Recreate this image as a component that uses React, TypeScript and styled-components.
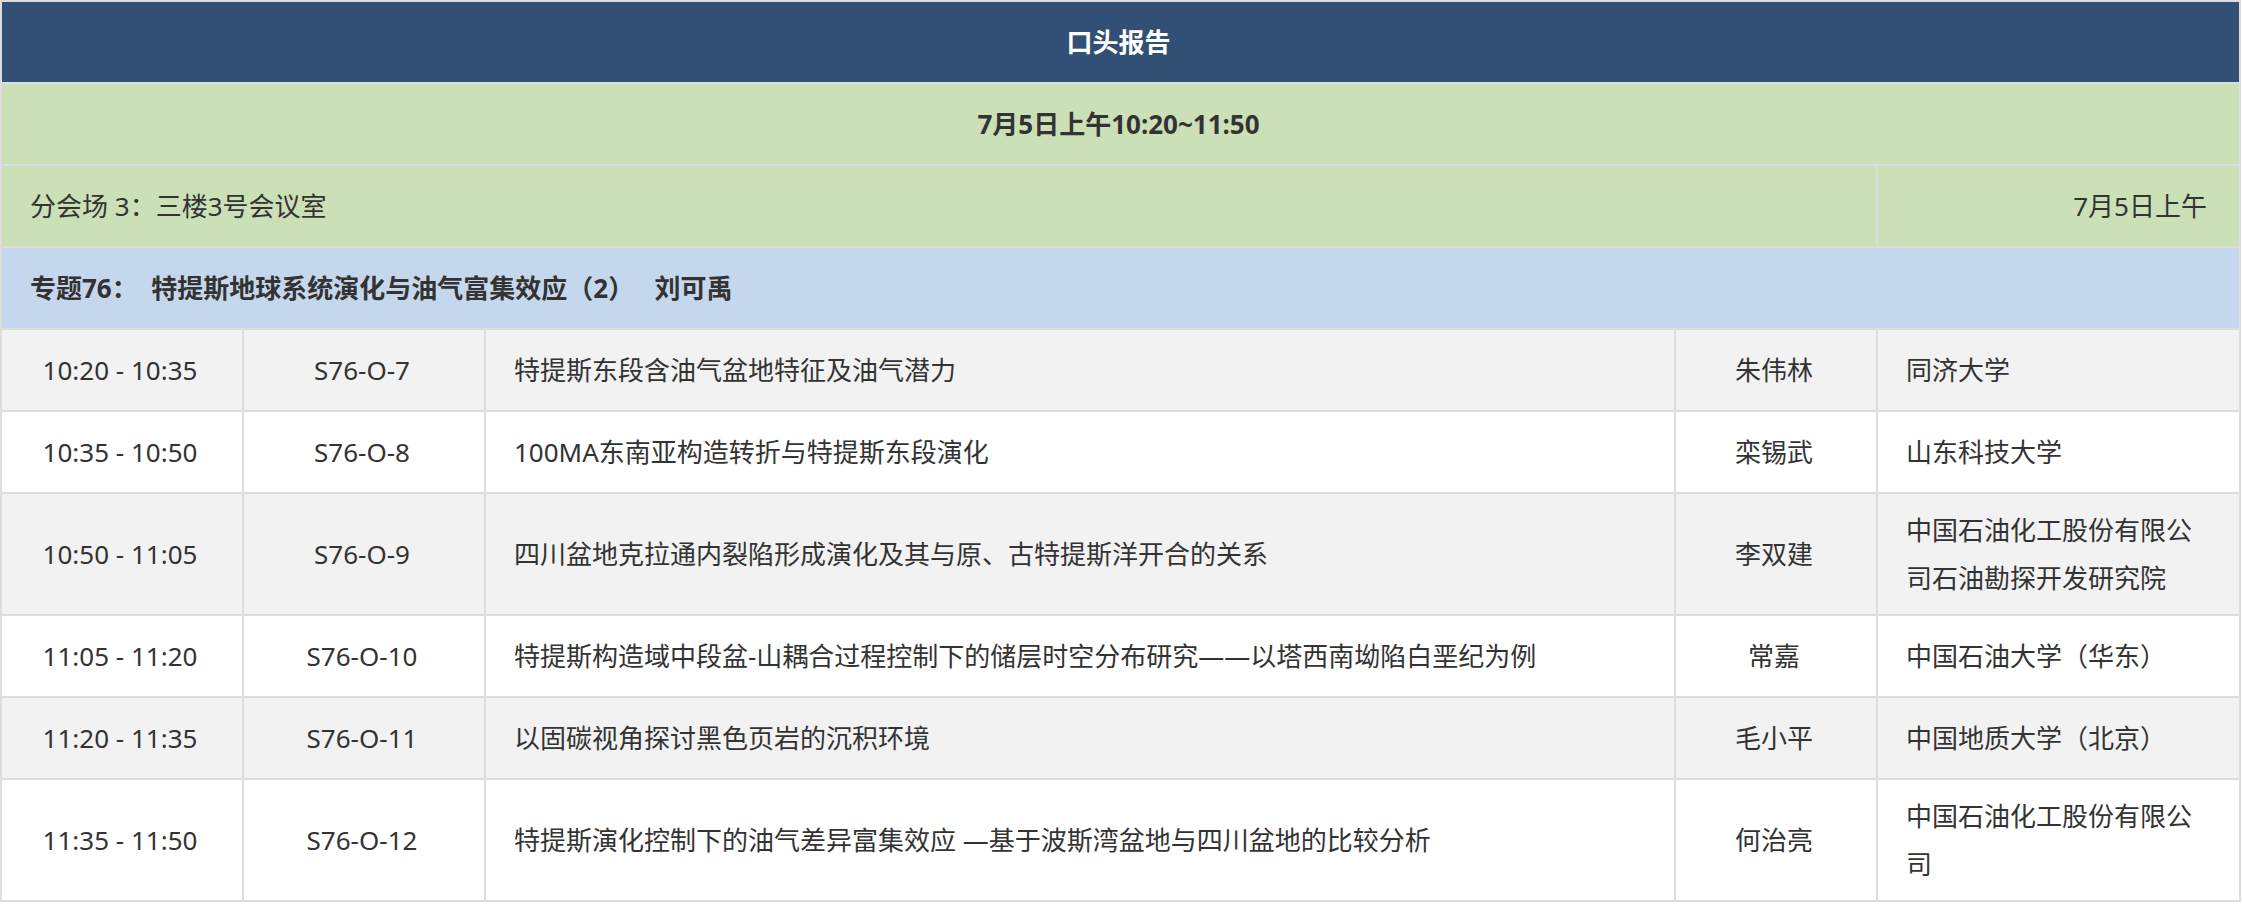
import React from "react";
import styled, { createGlobalStyle } from "styled-components";

const GlobalStyle = createGlobalStyle`
  html, body {
    margin: 0;
    padding: 0;
    background: #ffffff;
  }
  body {
    font-family: "Noto Sans", "Noto Sans CJK SC", sans-serif;
    color: #333333;
  }
`;

const colors = {
  navy: "#324f76",
  green: "#cce0b7",
  blue: "#c5d7ec",
  stripe: "#f2f2f2",
  white: "#ffffff",
  border: "#dddddd",
  text: "#333333",
};

interface Talk {
  time: string;
  code: string;
  title: string;
  speaker: string;
  org: string;
}

const talks: Talk[] = [
  {
    time: "10:20 - 10:35",
    code: "S76-O-7",
    title: "特提斯东段含油气盆地特征及油气潜力",
    speaker: "朱伟林",
    org: "同济大学",
  },
  {
    time: "10:35 - 10:50",
    code: "S76-O-8",
    title: "100MA东南亚构造转折与特提斯东段演化",
    speaker: "栾锡武",
    org: "山东科技大学",
  },
  {
    time: "10:50 - 11:05",
    code: "S76-O-9",
    title: "四川盆地克拉通内裂陷形成演化及其与原、古特提斯洋开合的关系",
    speaker: "李双建",
    org: "中国石油化工股份有限公司石油勘探开发研究院",
  },
  {
    time: "11:05 - 11:20",
    code: "S76-O-10",
    title:
      "特提斯构造域中段盆-山耦合过程控制下的储层时空分布研究——以塔西南坳陷白垩纪为例",
    speaker: "常嘉",
    org: "中国石油大学（华东）",
  },
  {
    time: "11:20 - 11:35",
    code: "S76-O-11",
    title: "以固碳视角探讨黑色页岩的沉积环境",
    speaker: "毛小平",
    org: "中国地质大学（北京）",
  },
  {
    time: "11:35 - 11:50",
    code: "S76-O-12",
    title: "特提斯演化控制下的油气差异富集效应 —基于波斯湾盆地与四川盆地的比较分析",
    speaker: "何治亮",
    org: "中国石油化工股份有限公司",
  },
];

export default function App() {
  return (
    <>
      <GlobalStyle />
      <Schedule>
        <colgroup>
          <col style={{ width: 242 }} />
          <col style={{ width: 242 }} />
          <col style={{ width: 1190 }} />
          <col style={{ width: 202 }} />
          <col />
        </colgroup>
        <tbody>
          <BandRow $bg={colors.navy}>
            <BandCell colSpan={5} $align="center" $bold $color={colors.white}>
              口头报告
            </BandCell>
          </BandRow>
          <BandRow $bg={colors.green}>
            <BandCell colSpan={5} $align="center" $bold>
              7月5日上午10:20~11:50
            </BandCell>
          </BandRow>
          <BandRow $bg={colors.green}>
            <BandCell colSpan={4}>分会场 3：三楼3号会议室</BandCell>
            <BandCell $align="right">7月5日上午</BandCell>
          </BandRow>
          <BandRow $bg={colors.blue}>
            <BandCell colSpan={5} $bold>
              专题76：&nbsp;&nbsp;特提斯地球系统演化与油气富集效应（2）&nbsp;&nbsp;&nbsp;刘可禹
            </BandCell>
          </BandRow>
          {talks.map((talk, i) => (
            <TalkRow key={talk.code} $striped={i % 2 === 0}>
              <TalkCell $align="center">{talk.time}</TalkCell>
              <TalkCell $align="center">{talk.code}</TalkCell>
              <TalkCell>{talk.title}</TalkCell>
              <TalkCell $align="center">{talk.speaker}</TalkCell>
              <TalkCell>{talk.org}</TalkCell>
            </TalkRow>
          ))}
        </tbody>
      </Schedule>
    </>
  );
}

const Schedule = styled.table`
  width: 2241px;
  border-collapse: collapse;
  table-layout: fixed;
  font-size: 26px;
  line-height: 48px;
  color: ${colors.text};
`;

const BandRow = styled.tr<{ $bg: string }>`
  background-color: ${(p) => p.$bg};
`;

const BandCell = styled.td<{
  $align?: "left" | "center" | "right";
  $bold?: boolean;
  $color?: string;
}>`
  height: 56px;
  padding: 12px 32px 12px 28px;
  border: 2px solid ${colors.border};
  text-align: ${(p) => p.$align || "left"};
  font-weight: ${(p) => (p.$bold ? 700 : 400)};
  color: ${(p) => p.$color || colors.text};
  white-space: nowrap;
`;

const TalkRow = styled.tr<{ $striped: boolean }>`
  background-color: ${(p) => (p.$striped ? colors.stripe : colors.white)};
`;

const TalkCell = styled.td<{ $align?: "left" | "center" }>`
  height: 56px;
  padding: 12px 32px 12px 28px;
  border: 2px solid ${colors.border};
  text-align: ${(p) => p.$align || "left"};
  vertical-align: middle;
`;
